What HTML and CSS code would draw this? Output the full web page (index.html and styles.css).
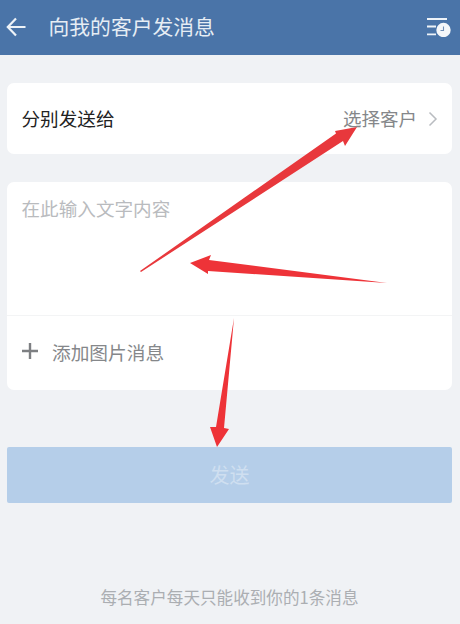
FILE: index.html
```html
<!DOCTYPE html>
<html lang="zh-CN">
<head>
<meta charset="utf-8">
<title>向我的客户发消息</title>
<link rel="stylesheet" href="styles.css">
</head>
<body>
<div class="screen">
  <header class="topbar">
    <svg class="back" viewBox="0 0 20 20" width="20" height="20"><path d="M19.500 10H2.500M10 1.500L1.800 10l8.200 8.500" fill="none" stroke="#eef3f8" stroke-width="2.200"/></svg>
    <h1 class="title">向我的客户发消息</h1>
    <svg class="history" viewBox="0 0 26 20" width="26" height="20">
      <path d="M1 2H21M1 9.500H10M1 17.300H10" fill="none" stroke="#eef3f8" stroke-width="1.800"/>
      <circle cx="17.500" cy="13" r="7.200" fill="#f4f7fa"/>
      <path d="M17.500 9.500V13.500H14.500" fill="none" stroke="#6f8fb6" stroke-width="1.100"/>
    </svg>
  </header>
  <main class="content">
    <section class="card row-select">
      <span class="label">分别发送给</span>
      <span class="pick">选择客户</span>
      <svg class="chevron" viewBox="0 0 10 16" width="10" height="16"><path d="M1.500 1.500L8 8l-6.500 6.500" fill="none" stroke="#b9bcc0" stroke-width="1.500"/></svg>
    </section>
    <section class="card composer">
      <div class="message">在此输入文字内容</div>
      <div class="add-image">
        <svg class="plus" viewBox="0 0 18 18" width="18" height="18"><path d="M9 1V17M1 9H17" fill="none" stroke="#7d7f82" stroke-width="2.400"/></svg>
        <span>添加图片消息</span>
      </div>
    </section>
    <button class="send" type="button">发送</button>
    <p class="note">每名客户每天只能收到你的1条消息</p>
  </main>
  <svg class="arrows" viewBox="0 0 460 624" width="460" height="624">
    <polygon points="140,271 336,133.500 335,131 357,127 345,146 343,141 141,272" fill="#e8383c"/>
    <polygon points="387,283 209,260 211,255 190,263 208,274 208,271" fill="#ee3338"/>
    <polygon points="234,318 216,427 210,427 217,447 229,429 224,428" fill="#ee3338"/>
  </svg>
</div>
</body>
</html>
```
FILE: styles.css
```css
* { box-sizing: border-box; }
html, body { margin: 0; padding: 0; }
body {
  width: 460px;
  height: 624px;
  overflow: hidden;
  font-family: "Noto Sans CJK SC", "Noto Sans", sans-serif;
  background: #f0f2f5;
}
.screen { position: relative; width: 460px; height: 624px; display: flex; flex-direction: column; }
.topbar {
  height: 55px;
  flex: none;
  display: flex;
  align-items: center;
  padding: 0 8px 0 6px;
  background: #4a74a8;
  color: #e6edf4;
}
.back { flex: none; margin-bottom: 1px; }
.title { margin: 0 0 0 22.500px; flex: 1; font-size: 20.800px; font-weight: 400; line-height: 1; padding-bottom: 3px; }
.history { flex: none; margin-bottom: 1px; }
.content { flex: 1; display: flex; flex-direction: column; padding: 28px 8px 0 7px; }
.card { background: #fff; border-radius: 7px; }
.row-select { height: 71px; display: flex; align-items: center; padding: 0 14px 0 14.500px; }
.label { flex: 1; font-size: 18.600px; color: #222; line-height: 1; padding-bottom: 1px; }
.pick { font-size: 18.500px; color: #85878a; line-height: 1; padding-bottom: 1px; }
.chevron { margin-left: 11px; }
.composer { margin-top: 28px; height: 208px; display: flex; flex-direction: column; }
.message {
  height: 134px;
  padding: 16px 15px 0 14.500px;
  border-bottom: 1px solid #f3f4f5;
  font-size: 18.600px;
  line-height: 20px;
  color: #b9bbbe;
}
.add-image {
  flex: 1;
  display: flex;
  align-items: center;
  padding: 0 15px 4px 14px;
  font-size: 18.700px;
  color: #85878a;
}
.plus { margin-right: 13px; }
.send {
  margin-top: 57px;
  height: 56px;
  border: 0;
  border-radius: 2px;
  background: #b5cee9;
  color: #cfdff0;
  font: inherit;
  font-size: 20px;
  padding: 0 0 2px;
}
.note {
  margin: 84px 0 0;
  text-align: center;
  font-size: 16.600px;
  line-height: 20px;
  color: #abaeb2;
}
.arrows { position: absolute; left: 0; top: 0; pointer-events: none; }
```
